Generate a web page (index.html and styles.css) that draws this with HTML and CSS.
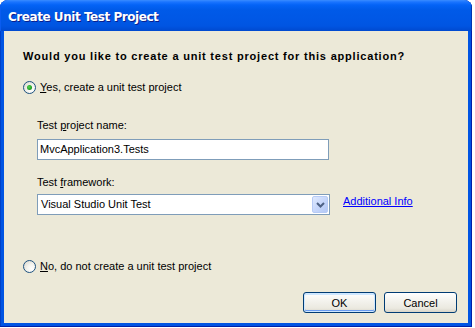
FILE: index.html
```html
<!DOCTYPE html>
<html>
<head>
<meta charset="utf-8">
<link rel="stylesheet" href="styles.css">
</head>
<body>
<div class="window">
  <div class="titlebar"><span class="title">Create Unit Test Project</span></div>
  <div class="content">
    <div class="heading">Would you like to create a unit test project for this application?</div>
    <label class="radio-row yes">
      <span class="radio checked"><span class="dot"></span></span>
      <span class="rlabel"><u>Y</u>es, create a unit test project</span>
    </label>
    <div class="group">
      <div class="flabel name-label">Test <u>p</u>roject name:</div>
      <div class="textbox">MvcApplication3.Tests</div>
      <div class="flabel fw-label">Test <u>f</u>ramework:</div>
      <div class="select-row">
        <div class="select">
          <span class="select-text">Visual Studio Unit Test</span>
          <span class="drop">
            <svg width="9" height="6" viewBox="0 0 9 6"><path d="M1 1 L4.5 4.5 L8 1" fill="none" stroke="#4d6185" stroke-width="2"/></svg>
          </span>
        </div>
        <a class="link" href="#">Additional Info</a>
      </div>
    </div>
    <label class="radio-row no">
      <span class="radio"></span>
      <span class="rlabel"><u>N</u>o, do not create a unit test project</span>
    </label>
    <div class="spacer"></div>
    <div class="buttons">
      <button class="btn default">OK</button>
      <button class="btn">Cancel</button>
    </div>
  </div>
</div>
</body>
</html>
```
FILE: styles.css
```css
html, body {
  margin: 0;
  padding: 0;
  background: #ffffff;
}
body {
  font-family: "Liberation Sans", Arial, sans-serif;
  font-size: 11px;
  color: #000;
}
.window {
  width: 472px;
  height: 327px;
  display: flex;
  flex-direction: column;
  background: #0054e3;
  border-radius: 8px 8px 0 0;
  overflow: hidden;
  box-sizing: border-box;
  box-shadow: inset 0 -1px 0 #0020a8, inset 1px 0 0 #0040c8, inset -1px 0 0 #0020a8;
}
.titlebar {
  height: 31px;
  flex: none;
  display: flex;
  align-items: center;
  padding-left: 8px;
  padding-top: 3px;
  box-sizing: border-box;
  background: linear-gradient(to bottom, #3a8cff 0px, #1a74ff 2px, #0463f6 5px, #005ae8 10px, #0057e5 20px, #0055e2 26px, #0049cf 31px);
  box-shadow: inset 1px 0 0 #0a5cf0, inset -1px 0 0 #0034b0;
}
.title {
  color: #fff;
  font-family: "DejaVu Sans", sans-serif;
  font-weight: bold;
  font-size: 12px;
  letter-spacing: -0.45px;
  text-shadow: 1px 1px 0 #0a1e8c;
}
.content {
  flex: 1;
  margin: 0 4px 4px 4px;
  background: #ece9d8;
  display: flex;
  flex-direction: column;
  padding: 0 11px 10px 19px;
  box-sizing: border-box;
  line-height: 13px;
}
.heading {
  margin-top: 19px;
  font-weight: bold;
  letter-spacing: 0.8px;
  white-space: nowrap;
}
.radio-row {
  display: flex;
  align-items: center;
  height: 13px;
}
.radio-row.yes { margin-top: 18px; }
.radio-row.no { margin-top: 45px; }
.rlabel { margin-left: 4px; }
.radio {
  width: 13px;
  height: 13px;
  border-radius: 50%;
  box-sizing: border-box;
  border: 1px solid #1c5180;
  background: radial-gradient(circle at 70% 70%, #ffffff 0, #f4f4ef 40%, #d6d3c8 100%);
  display: flex;
  align-items: center;
  justify-content: center;
  flex: none;
}
.dot {
  width: 5px;
  height: 5px;
  border-radius: 50%;
  background: radial-gradient(circle at 40% 40%, #55d451 0, #21a121 60%, #1a8a1a 100%);
}
.group {
  padding-left: 14px;
  display: flex;
  flex-direction: column;
}
.name-label { margin-top: 25px; }
.fw-label { margin-top: 16px; }
.textbox {
  margin-top: 7px;
  width: 292px;
  height: 21px;
  box-sizing: border-box;
  border: 1px solid #7f9db9;
  background: #fff;
  padding-left: 2px;
  display: flex;
  align-items: center;
}
.select-row {
  margin-top: 5px;
  display: flex;
  align-items: center;
}
.select {
  width: 293px;
  height: 21px;
  box-sizing: border-box;
  border: 1px solid #7f9db9;
  background: #fff;
  display: flex;
  align-items: center;
  justify-content: space-between;
  padding: 1px;
}
.select-text { padding-left: 2px; }
.drop {
  width: 16px;
  height: 17px;
  box-sizing: border-box;
  border: 1px solid #b7cbf6;
  border-radius: 2px;
  background: linear-gradient(to bottom right, #dfe9fe 0, #c7d7fb 50%, #b3c8f5 100%);
  display: flex;
  align-items: center;
  justify-content: center;
}
.link {
  margin-left: 13px;
  color: #0000ff;
  text-decoration: underline;
  margin-top: -6px;
}
.spacer { flex: 1; }
.buttons {
  display: flex;
  justify-content: flex-end;
  gap: 8px;
}
.btn {
  width: 73px;
  height: 21px;
  box-sizing: border-box;
  border: 1px solid #003c74;
  border-radius: 3px;
  background: linear-gradient(to bottom, #ffffff 0, #f4f3ee 40%, #ebe9e0 80%, #d8d5c8 100%);
  font-family: "Liberation Sans", Arial, sans-serif;
  font-size: 11px;
  color: #000;
  padding: 0;
}
.btn.default {
  box-shadow: inset 0 0 0 1px #cee7ff, inset 0 -1px 0 1px #6a9cf0, inset 0 1px 0 1px #cee7ff;
}
```
